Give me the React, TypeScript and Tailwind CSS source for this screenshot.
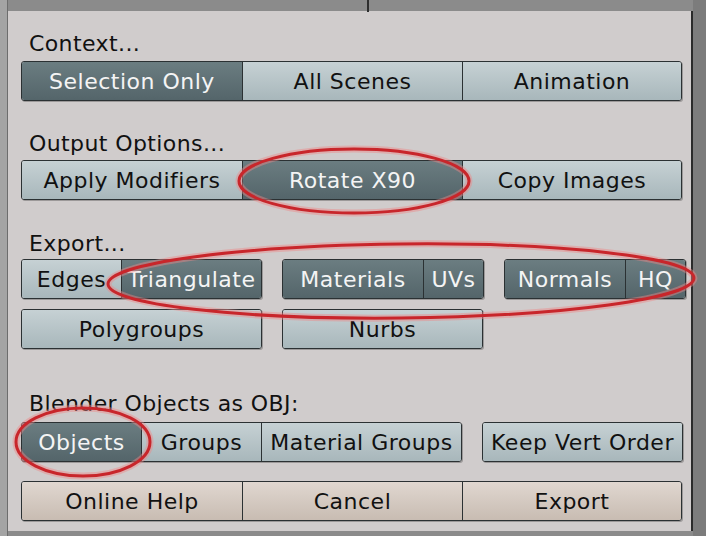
import clsx from 'clsx';

type Tone = 'off' | 'on' | 'action';

type Item = { label: string; w: string; tone?: Tone };

function Group({ items }: { items: Item[] }) {
  return (
    <div className="flex h-full w-fit overflow-hidden rounded-[3px] border border-[#2b3133] shadow-[1px_1px_0_rgba(0,0,0,0.25)]">
      {items.map((it, i) => (
        <div
          key={it.label}
          className={clsx(
            'flex h-full shrink-0 items-center justify-center whitespace-nowrap pt-[1px] tracking-[0.5px]',
            it.w,
            i > 0 && 'border-l border-[#2b3133]',
            it.tone === 'on' &&
              'bg-linear-to-b from-[#6b7d81] to-[#54656a] text-[#f4f4f4]',
            it.tone === 'action' &&
              'bg-linear-to-b from-[#e0d7d0] to-[#c8bcb2] text-[#111111]',
            (!it.tone || it.tone === 'off') &&
              'bg-linear-to-b from-[#c6d1d4] to-[#a8b7bb] text-[#111111]'
          )}
        >
          {it.label}
        </div>
      ))}
    </div>
  );
}

function Label({ children }: { children: string }) {
  return (
    <div className="h-[24px] pl-[8px] leading-[24px] tracking-[0.4px] text-[#111111]">
      {children}
    </div>
  );
}

export default function App() {
  return (
    <div className="relative flex h-[536px] w-[706px] overflow-hidden bg-[#8b8b8b] font-['DejaVu_Sans',sans-serif] text-[22px]">
      {/* window divider above the panel */}
      <div className="absolute left-[367px] top-0 h-[12px] w-[2px] bg-[#2e2e2e]" />

      {/* left strip */}
      <div className="w-[8px] shrink-0 border-r border-[#6d6d6d] bg-[#a4a4a4]" />

      {/* export panel */}
      <div className="mt-[11px] flex h-[520px] w-[685px] shrink-0 flex-col border-r-2 border-[#2a2a2a] bg-[#d0cccc] pl-[13px] pt-[21px]">
        <Label>Context...</Label>
        <div className="mt-[5px] h-[40px]">
          <Group
            items={[
              { label: 'Selection Only', w: 'w-[220px]', tone: 'on' },
              { label: 'All Scenes', w: 'w-[220px]' },
              { label: 'Animation', w: 'w-[219px]' },
            ]}
          />
        </div>

        <div className="mt-[31px]">
          <Label>Output Options...</Label>
        </div>
        <div className="mt-[4px] h-[40px]">
          <Group
            items={[
              { label: 'Apply Modifiers', w: 'w-[220px]' },
              { label: 'Rotate X90', w: 'w-[220px]', tone: 'on' },
              { label: 'Copy Images', w: 'w-[219px]' },
            ]}
          />
        </div>

        <div className="mt-[32px]">
          <Label>Export...</Label>
        </div>
        <div className="mt-[3px] flex h-[40px] gap-[20px]">
          <Group
            items={[
              { label: 'Edges', w: 'w-[99px]' },
              { label: 'Triangulate', w: 'w-[140px]', tone: 'on' },
            ]}
          />
          <Group
            items={[
              { label: 'Materials', w: 'w-[140px]', tone: 'on' },
              { label: 'UVs', w: 'w-[60px]', tone: 'on' },
            ]}
          />
          <Group
            items={[
              { label: 'Normals', w: 'w-[120px]', tone: 'on' },
              { label: 'HQ', w: 'w-[60px]', tone: 'on' },
            ]}
          />
        </div>
        <div className="mt-[10px] flex h-[40px] gap-[20px]">
          <Group items={[{ label: 'Polygroups', w: 'w-[239px]' }]} />
          <Group items={[{ label: 'Nurbs', w: 'w-[199px]' }]} />
        </div>

        <div className="mt-[43px]">
          <Label>Blender Objects as OBJ:</Label>
        </div>
        <div className="mt-[6px] flex h-[40px] gap-[20px]">
          <Group
            items={[
              { label: 'Objects', w: 'w-[119px]', tone: 'on' },
              { label: 'Groups', w: 'w-[120px]' },
              { label: 'Material Groups', w: 'w-[200px]' },
            ]}
          />
          <Group items={[{ label: 'Keep Vert Order', w: 'w-[199px]' }]} />
        </div>

        <div className="mt-[19px] h-[40px]">
          <Group
            items={[
              { label: 'Online Help', w: 'w-[220px]', tone: 'action' },
              { label: 'Cancel', w: 'w-[220px]', tone: 'action' },
              { label: 'Export', w: 'w-[219px]', tone: 'action' },
            ]}
          />
        </div>
      </div>

      {/* right strip */}
      <div className="flex-1 bg-[#7c7c7c]" />

      {/* red annotation marks drawn over the screenshot */}
      <svg
        className="pointer-events-none absolute left-0 top-0"
        width="706"
        height="536"
        viewBox="0 0 706 536"
      >
        <g fill="none" stroke="#e88" strokeOpacity="0.45" strokeWidth="7">
          <ellipse cx="354" cy="181" rx="115" ry="32" />
          <ellipse cx="401" cy="281" rx="293" ry="37" transform="rotate(-0.6 401 281)" />
          <ellipse cx="83" cy="442" rx="67" ry="34" />
        </g>
        <g fill="none" stroke="#c8262b" strokeWidth="3">
          <ellipse cx="354" cy="181" rx="115" ry="32" />
          <ellipse cx="401" cy="281" rx="293" ry="37" transform="rotate(-0.6 401 281)" />
          <ellipse cx="83" cy="442" rx="67" ry="34" />
        </g>
      </svg>
    </div>
  );
}
